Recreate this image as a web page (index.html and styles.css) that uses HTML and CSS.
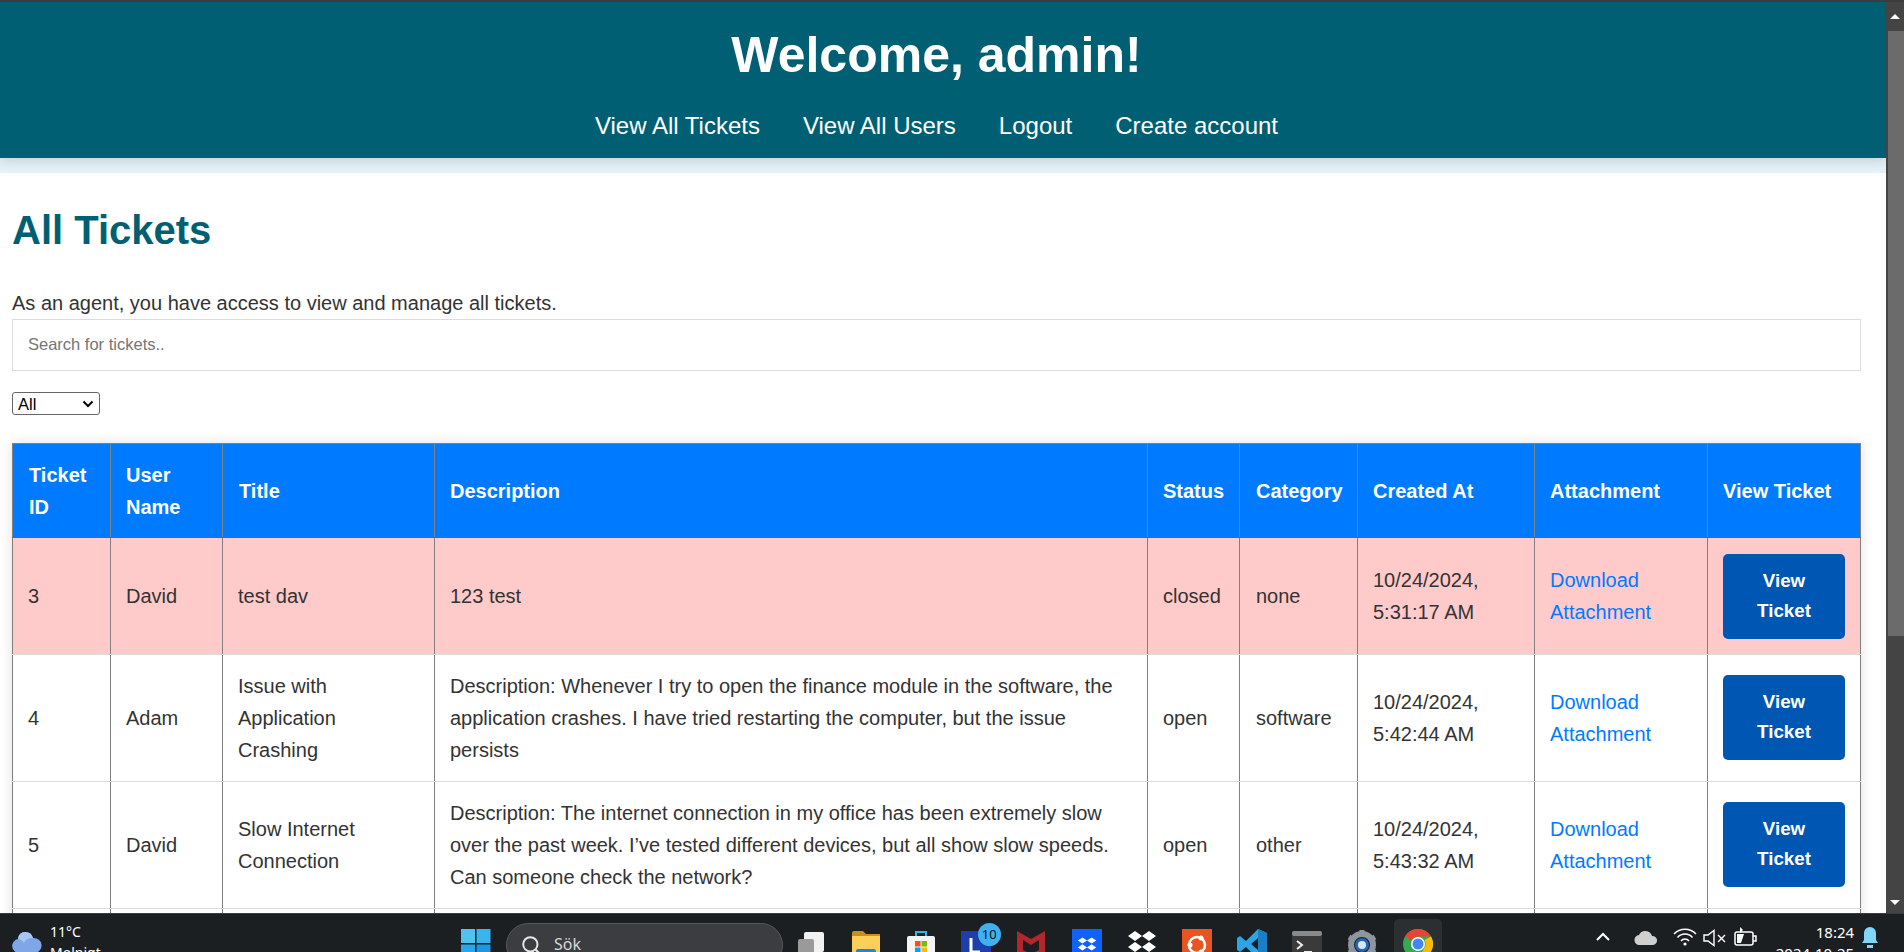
FILE: index.html
```html
<!DOCTYPE html>
<html lang="en">
<head>
<meta charset="utf-8">
<title>All Tickets</title>
<link rel="stylesheet" href="styles.css">
</head>
<body>
<div class="screen">
  <div class="topline"></div>
  <div class="browser">
    <div class="viewport">
      <header class="site-header">
        <h1>Welcome, admin!</h1>
        <nav class="site-nav">
          <a href="#">View All Tickets</a>
          <a href="#">View All Users</a>
          <a href="#">Logout</a>
          <a href="#">Create account</a>
        </nav>
      </header>
      <main class="content">
        <h2>All Tickets</h2>
        <p class="intro">As an agent, you have access to view and manage all tickets.</p>
        <input class="search" type="text" placeholder="Search for tickets..">
        <div class="filter-wrap">
          <select class="filter"><option>All</option></select>
          <svg class="filter-arrow" viewBox="0 0 12 8" width="12" height="8"><path d="M1.500 1.500L6 6l4.500-4.500" fill="none" stroke="#000" stroke-width="2"/></svg>
        </div>
        <table class="tickets">
          <colgroup>
            <col class="c-id"><col class="c-user"><col class="c-title"><col class="c-desc"><col class="c-status"><col class="c-cat"><col class="c-created"><col class="c-att"><col class="c-view">
          </colgroup>
          <thead>
            <tr><th>Ticket ID</th><th>User Name</th><th>Title</th><th>Description</th><th>Status</th><th>Category</th><th>Created At</th><th>Attachment</th><th>View Ticket</th></tr>
          </thead>
          <tbody>
            <tr class="closed">
              <td>3</td><td>David</td><td>test dav</td><td>123 test</td><td>closed</td><td>none</td>
              <td>10/24/2024, 5:31:17 AM</td><td><a href="#">Download Attachment</a></td><td><a class="btn" href="#">View Ticket</a></td>
            </tr>
            <tr>
              <td>4</td><td>Adam</td><td>Issue with Application Crashing</td><td>Description: Whenever I try to open the finance module in the software, the application crashes. I have tried restarting the computer, but the issue persists</td><td>open</td><td>software</td>
              <td>10/24/2024, 5:42:44 AM</td><td><a href="#">Download Attachment</a></td><td><a class="btn" href="#">View Ticket</a></td>
            </tr>
            <tr>
              <td>5</td><td>David</td><td>Slow Internet Connection</td><td>Description: The internet connection in my office has been extremely slow over the past week. I’ve tested different devices, but all show slow speeds. Can someone check the network?</td><td>open</td><td>other</td>
              <td>10/24/2024, 5:43:32 AM</td><td><a href="#">Download Attachment</a></td><td><a class="btn" href="#">View Ticket</a></td>
            </tr>
            <tr class="cut">
              <td></td><td></td><td></td><td></td><td></td><td></td><td></td><td></td><td></td>
            </tr>
          </tbody>
        </table>
      </main>
    </div>
    <div class="scrollbar">
      <span class="arrow up"></span>
      <span class="thumb"></span>
      <span class="arrow down"></span>
    </div>
  </div>
  <footer class="taskbar">
    <div class="weather">
      <svg class="cloud" viewBox="0 0 30 24" width="30" height="24"><path fill="#7fa6e8" d="M7 24a7 7 0 0 1-1-13.900A7 7 0 0 1 13 3a8 8 0 0 1 8 6 7.500 7.500 0 0 1 2 15z"/><path fill="#a9c6f2" d="M6 10a7 7 0 0 1 7-7 8 8 0 0 1 8 6c-5 0-8 2-9 5-2-3-4-4-6-4z"/></svg>
      <div class="weather-text"><span>11°C</span><span>Molnigt</span></div>
    </div>
    <div class="apps">
      <svg class="start" viewBox="0 0 30 30" width="30" height="30"><rect x="0" y="0" width="14" height="14" fill="#4fc3f0"/><rect x="15.500" y="0" width="14" height="14" fill="#39b4ec"/><rect x="0" y="15.500" width="14" height="14" fill="#2aa6e8"/><rect x="15.500" y="15.500" width="14" height="14" fill="#1d97e0"/></svg>
      <div class="searchbox">
        <svg viewBox="0 0 20 20" width="22" height="22"><circle cx="8.500" cy="8.500" r="6.500" fill="none" stroke="#e6e6e6" stroke-width="1.800"/><path d="M13 13l5.500 5.500" stroke="#e6e6e6" stroke-width="2"/></svg>
        <span>Sök</span>
      </div>
      <div class="app-icons">
        <span class="app"><svg viewBox="0 0 30 30" width="30" height="30"><rect x="8" y="3" width="20" height="20" rx="2" fill="#f1f1f1"/><rect x="2" y="10" width="16" height="16" rx="2" fill="#9a9a9a"/></svg></span>
        <span class="app"><svg viewBox="0 0 30 30" width="30" height="30"><path fill="#c8921a" d="M1 4a2 2 0 0 1 2-2h9l3 3h14v4H1z"/><path fill="#fbcf5a" d="M1 7h28v21H1z"/><rect x="5" y="20" width="20" height="8" rx="2" fill="#1e88d8"/></svg></span>
        <span class="app"><svg viewBox="0 0 30 30" width="30" height="30"><path fill="none" stroke="#35b2e8" stroke-width="2" d="M10 7V3h10v4"/><rect x="1" y="7" width="28" height="22" rx="2" fill="#f4f4f4"/><rect x="9" y="12" width="5.500" height="5.500" fill="#f25022"/><rect x="15.500" y="12" width="5.500" height="5.500" fill="#7fba00"/><rect x="9" y="18.500" width="5.500" height="5.500" fill="#00a4ef"/><rect x="15.500" y="18.500" width="5.500" height="5.500" fill="#ffb900"/></svg></span>
        <span class="app app-l">
          <svg viewBox="0 0 30 30" width="30" height="30"><rect x="0" y="2" width="30" height="28" fill="#1c3fa8"/><path d="M10 9v14h9" fill="none" stroke="#fff" stroke-width="3"/></svg>
          <b class="badge">10</b>
        </span>
        <span class="app"><svg viewBox="0 0 30 30" width="30" height="30"><path fill="#b3262c" d="M1 2l14 8 14-8v21l-14 7-14-7z"/><path fill="#1c1f22" d="M7 11l8 5 8-5v10l-8 4-8-4z"/></svg></span>
        <span class="app"><svg viewBox="0 0 30 30" width="30" height="30"><rect width="30" height="30" fill="#0f62fe"/><path fill="#fff" d="M9 7l6 4-6 4-6-4zM21 7l6 4-6 4-6-4zM9 16l6 4-6 4-6-4zM21 16l6 4-6 4-6-4z" transform="translate(3.500 3) scale(.77)"/></svg></span>
        <span class="app"><svg viewBox="0 0 30 30" width="30" height="30"><path fill="#fff" d="M8 2l7 5-7 5-7-5zM22 2l7 5-7 5-7-5zM8 13l7 5-7 5-7-5zM22 13l7 5-7 5-7-5zM15 23l7 5-7 5-7-5z"/></svg></span>
        <span class="app"><svg viewBox="0 0 30 30" width="30" height="30"><rect width="30" height="30" fill="#e95420"/><circle cx="15" cy="16" r="8" fill="none" stroke="#fff" stroke-width="2.500"/><circle cx="8" cy="16" r="2.500" fill="#fff"/><circle cx="19" cy="9" r="2.500" fill="#fff"/><circle cx="19" cy="23" r="2.500" fill="#fff"/></svg></span>
        <span class="app"><svg viewBox="0 0 30 30" width="30" height="30"><path fill="#2ba5e8" d="M21 0l9 4v22l-9 4-12-12-6 5-3-2v-12l3-2 6 5zM21 9l-7 6 7 6z"/><path fill="#1a7fc4" d="M21 0l9 4v22l-9 4z"/></svg></span>
        <span class="app"><svg viewBox="0 0 30 30" width="30" height="30"><rect y="2" width="30" height="28" rx="2" fill="#3a3a3a"/><rect y="2" width="30" height="5" rx="2" fill="#8a8a8a"/><path d="M5 12l5 4-5 4" fill="none" stroke="#eee" stroke-width="2"/><path d="M12 23h8" stroke="#eee" stroke-width="2"/></svg></span>
        <span class="app"><svg viewBox="0 0 30 30" width="30" height="30"><circle cx="15" cy="16" r="11" fill="none" stroke="#8d959e" stroke-width="6"/><path stroke="#8d959e" stroke-width="5" d="M15 1v6M15 25v5M2 8l5 3M23 21l5 3M2 24l5-3M23 11l5-3"/><circle cx="15" cy="16" r="7" fill="#2167b8"/><circle cx="15" cy="16" r="4" fill="#d8e4f2"/></svg></span>
        <span class="app active"><svg viewBox="0 0 30 30" width="30" height="30"><circle cx="15" cy="15" r="15" fill="#34a853"/><path fill="#ea4335" d="M15 0a15 15 0 0 1 13 7.500H15A7.500 7.500 0 0 0 8.500 11.200L2 7.500A15 15 0 0 1 15 0z"/><path fill="#fbbc05" d="M28 7.500A15 15 0 0 1 15 30l6.500-11.200A7.500 7.500 0 0 0 21.500 11z"/><circle cx="15" cy="15" r="7" fill="#fff"/><circle cx="15" cy="15" r="5.500" fill="#4285f4"/></svg></span>
      </div>
    </div>
    <div class="tray">
      <svg class="t-chev" viewBox="0 0 16 10" width="16" height="10"><path d="M2 8l6-6 6 6" fill="none" stroke="#fff" stroke-width="2"/></svg>
      <svg class="t-cloud" viewBox="0 0 24 16" width="24" height="16"><path fill="#cfcfcf" d="M6 16a5 5 0 0 1-1-10 7 7 0 0 1 13 1 4.500 4.500 0 0 1 1 9z"/></svg>
      <svg class="t-wifi" viewBox="0 0 24 18" width="24" height="18"><g fill="none" stroke="#fff" stroke-width="1.500"><path d="M1 6a15 15 0 0 1 22 0"/><path d="M4.500 9.500a10 10 0 0 1 15 0"/><path d="M8 13a5 5 0 0 1 8 0"/></g><circle cx="12" cy="16" r="1.600" fill="#fff"/></svg>
      <svg class="t-sound" viewBox="0 0 24 18" width="24" height="18"><g fill="none" stroke="#fff" stroke-width="1.400"><path d="M1 6h4l6-4.500v15L5 12H1z"/><path d="M15 6l7 7M22 6l-7 7"/></g></svg>
      <svg class="t-batt" viewBox="0 0 24 20" width="24" height="20"><g fill="none" stroke="#fff" stroke-width="1.500"><rect x="1" y="5" width="18" height="13" rx="2"/><path d="M19 9h3v5h-3"/></g><path fill="#fff" d="M3 7h7l-3 9H3z"/><path fill="#fff" d="M6 0v6l3-3z"/></svg>
      <div class="clock"><span>18:24</span><span>2024-10-25</span></div>
      <svg class="t-bell" viewBox="0 0 18 24" width="18" height="24"><path fill="#7fd6fa" d="M9 1a6 6 0 0 1 6 6v7l2 3H1l2-3V7a6 6 0 0 1 6-6zM6 19h6v3H6z"/></svg>
    </div>
  </footer>
</div>
</body>
</html>
```

FILE: styles.css
```css
* { box-sizing: border-box; }

html, body {
  margin: 0;
  height: 952px;
  overflow: hidden;
}

body {
  font-family: "Liberation Sans", Arial, sans-serif;
  font-size: 20px;
  line-height: 32px;
  color: #333;
}

.screen {
  width: 1904px;
  height: 952px;
  display: flex;
  flex-direction: column;
  overflow: hidden;
}

.topline {
  height: 2px;
  flex: none;
  background: #3c3c3c;
}

.browser {
  height: 911px;
  flex: none;
  display: flex;
  overflow: hidden;
}

.viewport {
  flex: 1;
  min-width: 0;
  background: #e4f2f7;
  overflow: hidden;
}

.site-header {
  height: 156px;
  padding: 13px 13px 0 0;
  background: #005f73;
  color: #fff;
  text-align: center;
  box-shadow: 0 4px 10px rgba(0, 0, 0, 0.12);
}

.site-header h1 {
  margin: 0;
  font-size: 50px;
  line-height: 80px;
  font-weight: 700;
}

.site-nav {
  margin-top: 12px;
  display: flex;
  justify-content: center;
  gap: 43px;
  font-size: 24px;
  line-height: 38px;
}

.site-nav a {
  color: #fff;
  text-decoration: none;
}

.content {
  margin-top: 15px;
  padding: 25px 25px 0 12px;
  background: #fff;
  height: 740px;
}

.content h2 {
  margin: 0;
  font-size: 40px;
  line-height: 64px;
  font-weight: 700;
  color: #005f73;
}

.intro {
  margin: 25px 0 0;
}

.search {
  display: block;
  width: 100%;
  height: 52px;
  padding: 0 15px 2px;
  border: 1px solid #dcdcdc;
  background: #fff;
  font-family: inherit;
  font-size: 16.500px;
  color: #333;
  outline: none;
}

.search::placeholder {
  color: #757575;
}

.filter-wrap {
  position: relative;
  width: 88px;
  height: 23px;
  margin-top: 21px;
}

.filter {
  display: block;
  width: 88px;
  height: 23px;
  padding: 0 0 0 5px;
  appearance: none;
  font-family: inherit;
  font-size: 16.500px;
  background: #fff;
  color: #000;
  border: 1px solid #666;
  border-radius: 3px;
}

.filter-arrow {
  position: absolute;
  top: 8px;
  right: 6px;
  pointer-events: none;
}

.tickets {
  width: 1848px;
  margin-top: 28px;
  table-layout: fixed;
  border-collapse: collapse;
  box-shadow: 0 0 12px rgba(0, 0, 0, 0.12);
  background: #fff;
}

.c-id { width: 98px; }
.c-user { width: 112px; }
.c-title { width: 212px; }
.c-desc { width: 713px; }
.c-status { width: 92px; }
.c-cat { width: 118px; }
.c-created { width: 177px; }
.c-att { width: 173px; }
.c-view { width: 153px; }

.tickets th,
.tickets td {
  padding: 15px;
  border-left: 1px solid #808080;
  border-right: 1px solid #808080;
  border-bottom: 1px solid #dcdcdc;
  text-align: left;
  vertical-align: middle;
  font-size: 20px;
  line-height: 32px;
}

.tickets th {
  padding-bottom: 14px;
  background: #007bff;
  color: #fff;
  font-weight: 700;
  border-top: 1px solid #808080;
  border-bottom-color: #007bff;
}

.tickets th:nth-child(1),
.tickets th:nth-child(3),
.tickets th:nth-child(6),
.tickets td:nth-child(6) {
  padding-left: 16px;
}

.tickets a {
  color: #007bff;
  text-decoration: none;
}

.closed td {
  background: #ffcaca;
}

.tickets .closed td:last-child {
  padding-top: 16px;
  padding-bottom: 13px;
}

.tickets .btn {
  display: block;
  width: 122px;
  height: 85px;
  margin-bottom: 2px;
  padding: 12px 20px;
  background: #0056b3;
  color: #fff;
  border-radius: 5px;
  text-align: center;
  font-size: 18.750px;
  line-height: 30px;
  font-weight: 700;
}

.cut td {
  height: 120px;
}

.scrollbar {
  position: relative;
  width: 18px;
  flex: none;
  background: #444;
  display: flex;
  flex-direction: column;
  align-items: center;
  padding-top: 12px;
}

.arrow {
  width: 0;
  height: 0;
  border-left: 5px solid transparent;
  border-right: 5px solid transparent;
}

.arrow.up {
  border-bottom: 5px solid #fff;
}

.arrow.down {
  border-top: 5px solid #fff;
  margin-top: 264px;
}

.thumb {
  align-self: flex-end;
  width: 16px;
  height: 605px;
  margin-top: 12px;
  background: #6b6b6b;
}

.taskbar {
  flex: 1;
  min-height: 0;
  overflow: hidden;
  display: flex;
  align-items: flex-start;
  background: #1c1f22;
  border-top: 1px solid #3a3d40;
  color: #fff;
  font-family: "Noto Sans", "Liberation Sans", sans-serif;
  font-size: 14px;
  line-height: 24px;
}

.weather {
  width: 461px;
  flex: none;
  display: flex;
  gap: 8px;
  padding: 15px 0 0 12px;
}

.weather-text {
  display: flex;
  flex-direction: column;
  margin-top: -8px;
  line-height: 21px;
}

.apps {
  display: flex;
  align-items: flex-start;
  flex: none;
}

.start {
  margin-top: 15px;
}

.searchbox {
  width: 277px;
  height: 44px;
  margin: 9px 0 0 15px;
  padding: 8px 0 0 14px;
  display: flex;
  gap: 11px;
  background: #3b3d40;
  border: 1px solid #55585b;
  border-radius: 22px;
  font-size: 16px;
  color: #d8d8d8;
}

.searchbox svg {
  margin-top: 3px;
}

.app-icons {
  display: flex;
  margin-left: 0;
}

.app {
  position: relative;
  width: 55.200px;
  height: 40px;
  display: flex;
  justify-content: center;
  padding-top: 15px;
  flex: none;
  overflow: visible;
}

.app.active {
  width: 48px;
  height: 44px;
  margin: 5px 0 0 4px;
  padding-top: 10px;
  background: #2c2f32;
  border-radius: 5px;
}

.badge {
  position: absolute;
  top: 9px;
  right: 3px;
  width: 23px;
  height: 23px;
  border-radius: 50%;
  background: #3fb0f0;
  color: #111;
  font-size: 13px;
  line-height: 23px;
  font-weight: 400;
  text-align: center;
}

.tray {
  display: flex;
  align-items: flex-start;
  flex: 1;
  margin-left: 153px;
  padding-top: 18px;
}

.t-chev { margin-top: 0; margin-right: 23px; }
.t-cloud { margin-top: -3px; margin-right: 15px; }
.t-wifi { margin-top: -4px; margin-right: 6px; }
.t-sound { margin-top: -3px; margin-right: 7px; }
.t-batt { margin-top: -5px; }

.clock {
  width: 96px;
  margin: -10px 7px 0 0;
  display: flex;
  flex-direction: column;
  align-items: flex-end;
  font-size: 15px;
  line-height: 21px;
}

.t-bell {
  margin-top: -6px;
}
```
